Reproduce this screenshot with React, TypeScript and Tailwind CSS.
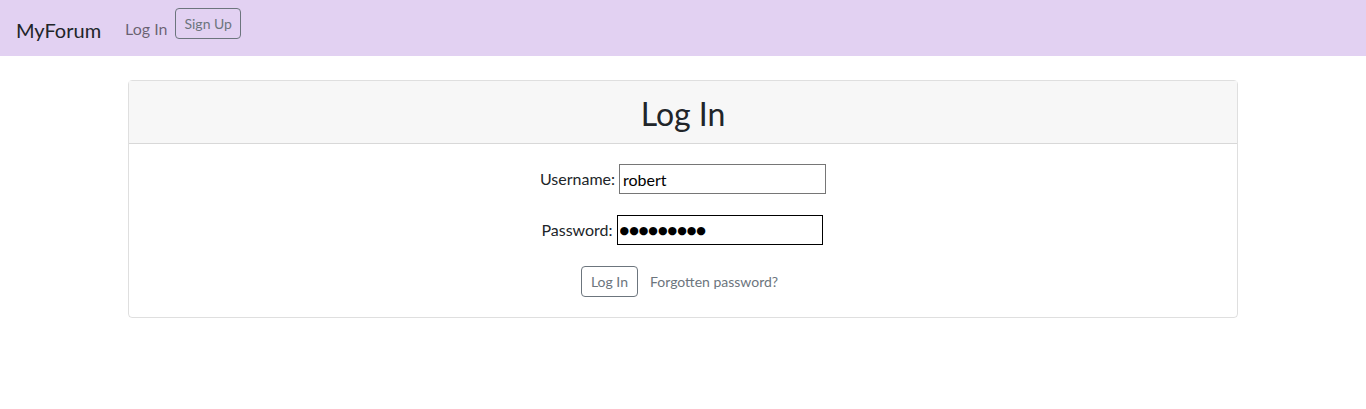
import React from "react";

export default function App() {
  return (
    <div className="min-h-[409px] bg-white text-[#212529]" style={{ fontFamily: 'Lato, "Noto Sans", sans-serif' }}>
      {/* Navbar */}
      <nav className="flex items-start bg-[#e2d1f2] px-4 py-2 h-14">
        <a href="#" className="pt-[7px] pb-[3px] mr-4 text-[20px] leading-[30px] text-[#212529]">
          MyForum
        </a>
        <a href="#" className="px-2 pt-[9px] pb-[7px] text-[16px] leading-6 text-black/55">
          Log In
        </a>
        <button className="px-2 py-1 text-[14px] leading-[21px] text-[#6c757d] border border-[#6c757d] rounded">
          Sign Up
        </button>
      </nav>

      {/* Card */}
      <div className="w-[1110px] mx-auto mt-6 border border-black/[.125] rounded">
        <div className="bg-[#f7f7f7] border-b border-black/[.125] px-5 pt-[14px] pb-[10px] text-center">
          <h2 className="text-[32px] leading-[38px] font-normal">Log In</h2>
        </div>
        <div className="p-5 flex flex-col items-center">
          <div className="flex items-center gap-1 text-[16px]">
            <label>Username:</label>
            <input
              readOnly
              value="robert"
              className="w-[207px] h-[30px] px-[3px] border border-[#767676] text-black outline-none"
            />
          </div>
          <div className="flex items-center gap-1 text-[16px] mt-[21px] pr-[2px]">
            <label>Password:</label>
            <input
              readOnly
              value="●●●●●●●●●"
              className="w-[206px] h-[30px] px-[2px] border border-black text-black text-[11px] outline-none"
              style={{ fontFamily: '"DejaVu Sans", sans-serif' }}
            />
          </div>
          <div className="flex items-center gap-3 mt-[21px] pr-[7px]">
            <button className="px-[9px] py-1 text-[14px] leading-[21px] text-[#6c757d] border border-[#6c757d] rounded">
              Log In
            </button>
            <a href="#" className="text-[14px] text-[#6c757d]">
              Forgotten password?
            </a>
          </div>
        </div>
      </div>
    </div>
  );
}
